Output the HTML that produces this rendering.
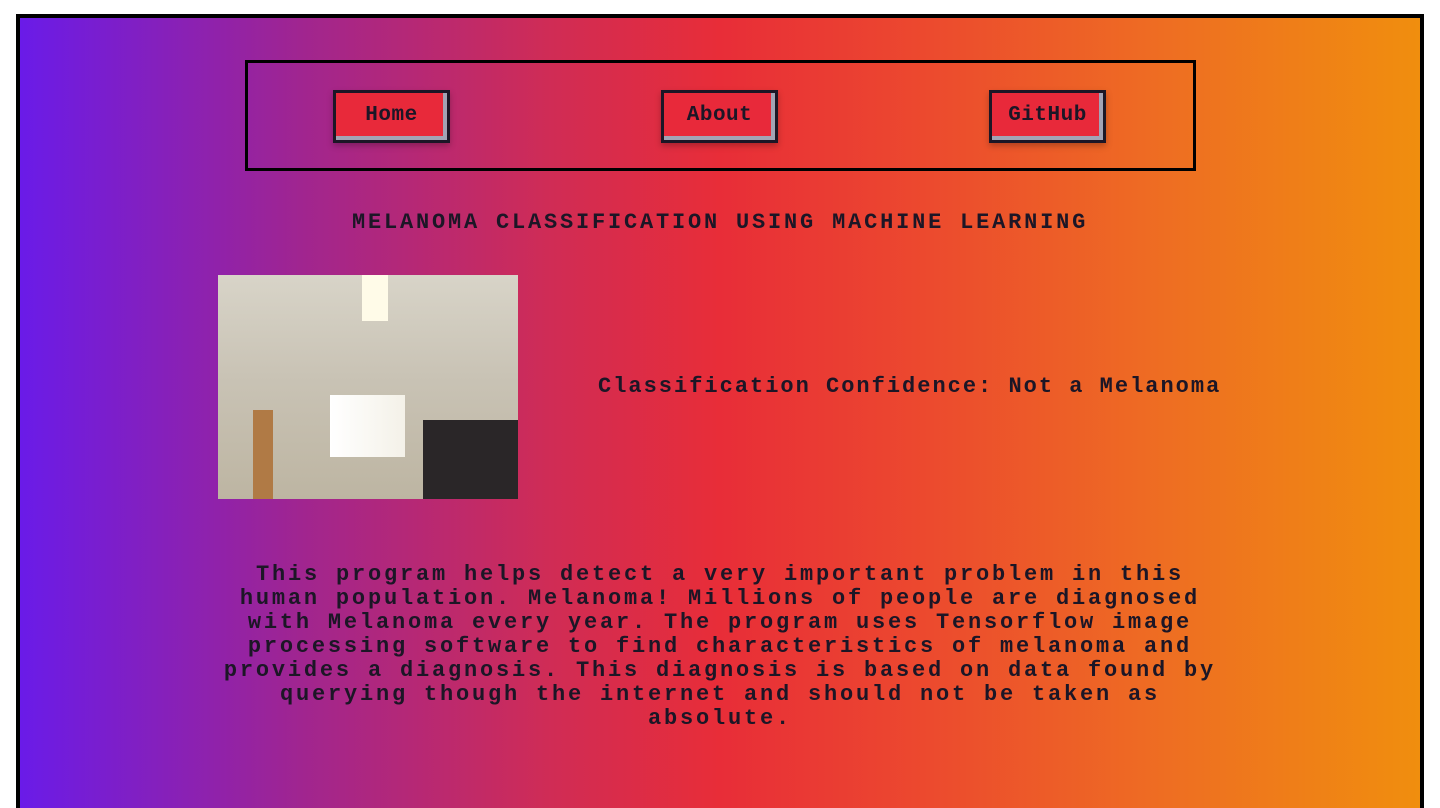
<!DOCTYPE html>
<html><head><style>
html,body{margin:0;padding:0;background:#fff;width:1440px;height:792px;overflow:hidden}
.page{position:absolute;left:16px;top:14px;width:1400px;height:790px;border:4px solid #000;border-bottom:none;
background:linear-gradient(90deg,#6a1be8 0%,#a02590 20%,#d02c55 38%,#e82d38 50%,#ec4a2e 65%,#ee6e22 82%,#f08e0e 100%)}
*{font-family:"Liberation Mono","DejaVu Sans Mono",monospace;color:#1c1626}
.nav{position:absolute;left:225px;top:42px;width:945px;height:105px;border:3px solid #000}
.btn{position:absolute;top:27px;width:111px;height:47px;background:#e8293a;border:3px solid #1c1626;
box-shadow:inset -4px -4px 0 #a3a3b5, 0 3px 6px rgba(0,0,0,.25);font-weight:bold;font-size:21px;letter-spacing:0.5px;
text-align:center;line-height:46px}
.t{position:absolute;white-space:nowrap;font-size:22px;letter-spacing:2.8px;font-weight:bold}
.img{position:absolute;left:198px;top:257px;width:300px;height:224px;
background:
linear-gradient(90deg,transparent 144px,#fffbe8 144px,#fffbe8 170px,transparent 170px) 0 0/100% 46px no-repeat,
linear-gradient(90deg,transparent 112px,#ffffff 112px,#f4f1e8 187px,transparent 187px) 0 120px/100% 62px no-repeat,
linear-gradient(90deg,transparent 35px,#b07a45 35px,#b07a45 55px,transparent 55px) 0 135px/100% 89px no-repeat,
linear-gradient(90deg,transparent 205px,#2a2628 205px) 0 145px/100% 79px no-repeat,
linear-gradient(180deg,#d8d4c8 0%,#c9c3b5 45%,#bdb5a2 100%)}
.p{position:absolute;left:100px;top:545px;width:1200px;text-align:center;font-size:22px;letter-spacing:2.8px;line-height:24px;font-weight:bold;white-space:nowrap}
</style></head><body>
<div class="page">
<div class="nav">
<div class="btn" style="left:85px">Home</div>
<div class="btn" style="left:413px">About</div>
<div class="btn" style="left:741px">GitHub</div>
</div>
<div class="t" style="left:332px;top:192px">MELANOMA CLASSIFICATION USING MACHINE LEARNING</div>
<div class="img"></div>
<div class="t" style="left:578px;top:356px;letter-spacing:2px">Classification Confidence: Not a Melanoma</div>
<div class="p">This program helps detect a very important problem in this<br>human population. Melanoma! Millions of people are diagnosed<br>with Melanoma every year. The program uses Tensorflow image<br>processing software to find characteristics of melanoma and<br>provides a diagnosis. This diagnosis is based on data found by<br>querying though the internet and should not be taken as<br>absolute.</div>
</div>
</body></html>
